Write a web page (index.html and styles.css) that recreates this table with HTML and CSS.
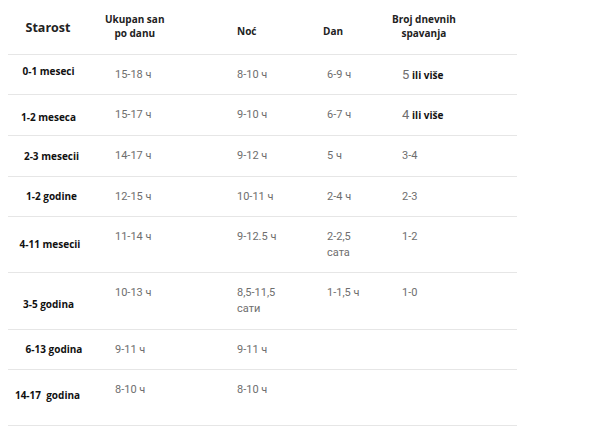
FILE: index.html
```html
<!DOCTYPE html>
<html lang="sr">
<head>
<meta charset="utf-8">
<title>Spavanje po uzrastu</title>
<link rel="stylesheet" href="styles.css">
</head>
<body>
<table class="sleep">
  <thead>
    <tr class="head">
      <th class="c1 title">Starost</th>
      <th class="c2"><span class="hb">Ukupan san<br>po danu</span></th>
      <th class="c3 low">Noć</th>
      <th class="c4 low">Dan</th>
      <th class="c5"><span class="hb">Broj dnevnih<br>spavanja</span></th>
    </tr>
  </thead>
  <tbody>
    <tr class="r40">
      <td class="c1 lab up sl">0-1 meseci</td>
      <td class="c2">15-18 ч</td>
      <td class="c3">8-10 ч</td>
      <td class="c4">6-9 ч</td>
      <td class="c5"><span class="big">5</span> <b>ili više</b></td>
    </tr>
    <tr class="r41">
      <td class="c1 lab dn sl">1-2 meseca</td>
      <td class="c2">15-17 ч</td>
      <td class="c3">9-10 ч</td>
      <td class="c4">6-7 ч</td>
      <td class="c5"><span class="big">4</span> <b>ili više</b></td>
    </tr>
    <tr class="r41">
      <td class="c1 lab sr">2-3 mesecii</td>
      <td class="c2">14-17 ч</td>
      <td class="c3">9-12 ч</td>
      <td class="c4">5 ч</td>
      <td class="c5">3-4</td>
    </tr>
    <tr class="r40">
      <td class="c1 lab sr">1-2 godine</td>
      <td class="c2">12-15 ч</td>
      <td class="c3">10-11 ч</td>
      <td class="c4">2-4 ч</td>
      <td class="c5">2-3</td>
    </tr>
    <tr class="r56">
      <td class="c1 lab">4-11 mesecii</td>
      <td class="c2">11-14 ч</td>
      <td class="c3">9-12.5 ч</td>
      <td class="c4">2-2,5<br>сата</td>
      <td class="c5">1-2</td>
    </tr>
    <tr class="r57">
      <td class="c1 lab down sl">3-5 godina</td>
      <td class="c2">10-13 ч</td>
      <td class="c3">8,5-11,5<br>сати</td>
      <td class="c4">1-1,5 ч</td>
      <td class="c5">1-0</td>
    </tr>
    <tr class="r40">
      <td class="c1 lab srr">6-13 godina</td>
      <td class="c2">9-11 ч</td>
      <td class="c3">9-11 ч</td>
      <td class="c4"></td>
      <td class="c5"></td>
    </tr>
    <tr class="r56">
      <td class="c1 lab sll lift">14-17&nbsp; godina</td>
      <td class="c2">8-10 ч</td>
      <td class="c3">8-10 ч</td>
      <td class="c4"></td>
      <td class="c5"></td>
    </tr>
  </tbody>
</table>
</body>
</html>
```
FILE: styles.css
```css
html, body {
  margin: 0;
  padding: 0;
  background: #ffffff;
}

body {
  padding: 0 8px;
}

.sleep {
  width: 509px;
  border-collapse: collapse;
  table-layout: fixed;
  font-family: Roboto, "Liberation Sans", sans-serif;
}

.sleep th,
.sleep td {
  padding: 0;
  border-bottom: 1px solid #e6e6e6;
  box-sizing: border-box;
}

.head th {
  height: 54px;
  font-family: "Open Sans", "Liberation Sans", sans-serif;
  font-weight: 700;
  font-size: 10px;
  line-height: 14px;
  color: #222;
  text-align: left;
  vertical-align: middle;
}

.head th.title {
  font-size: 12.5px;
  text-align: center;
  padding-right: 4px;
  padding-top: 2px;
}

.head th.low {
  padding-top: 8px;
}

.hb {
  display: inline-block;
  text-align: center;
  padding-bottom: 1px;
}

.c1 { width: 84px; }
.c2 { width: 132px; }
.c3 { width: 89px; }
.c4 { width: 75px; }
.c5 { width: 129px; }

.head .c2 { padding-left: 13px; }
.head .c3 { padding-left: 13px; }
.head .c4 { padding-left: 10px; }
.head .c5 { padding-left: 4px; }

.sleep tbody td {
  font-size: 11px;
  line-height: 16px;
  color: #6e6e6e;
  vertical-align: top;
  padding-top: 12px;
}

.sleep tbody td.c2 { padding-left: 23px; }
.sleep tbody td.c3 { padding-left: 13px; }
.sleep tbody td.c4 { padding-left: 14px; }
.sleep tbody td.c5 { padding-left: 14px; }

.sleep tbody td.lab {
  font-family: "Open Sans", "Liberation Sans", sans-serif;
  font-weight: 700;
  font-size: 10px;
  line-height: 14px;
  color: #111;
  text-align: center;
  vertical-align: middle;
  padding-top: 0;
}

.sleep tbody td.up { padding-bottom: 6px; }
.sleep tbody td.dn { padding-top: 4px; }
.sleep tbody td.down { padding-top: 6px; }
.sleep tbody td.lift { padding-bottom: 5px; }

.sleep tbody td.sl { padding-right: 3px; }
.sleep tbody td.sr { padding-left: 3px; }
.sleep tbody td.srr { padding-left: 8px; }
.sleep tbody td.sll { padding-right: 5px; }

.r40 td { height: 40px; }
.r41 td { height: 41px; }
.r56 td { height: 56px; }
.r57 td { height: 57px; }

.big {
  font-size: 13px;
}

td b {
  font-family: "Open Sans", "Liberation Sans", sans-serif;
  font-weight: 700;
  font-size: 10px;
  color: #111;
}
```
